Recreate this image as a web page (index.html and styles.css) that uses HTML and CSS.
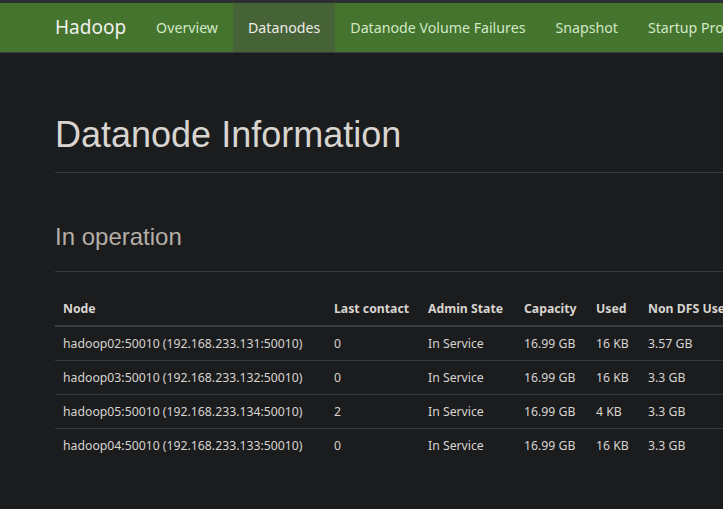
FILE: index.html
```html
<!DOCTYPE html>
<html>
<head>
<meta charset="utf-8">
<link rel="stylesheet" href="styles.css">
</head>
<body>
<div class="topstrip"></div>
<nav class="navbar">
  <a class="brand">Hadoop</a>
  <ul class="nav">
    <li><a>Overview</a></li>
    <li class="active"><a>Datanodes</a></li>
    <li><a>Datanode Volume Failures</a></li>
    <li><a>Snapshot</a></li>
    <li><a>Startup Progress</a></li>
    <li><a>Utilities</a></li>
  </ul>
</nav>
<main class="container">
  <div class="page-header">
    <h1>Datanode Information</h1>
  </div>
  <div class="page-header small">
    <h2>In operation</h2>
  </div>
  <table class="table">
    <colgroup>
      <col class="c-node"><col class="c-last"><col class="c-admin"><col class="c-cap"><col class="c-used"><col class="c-non">
    </colgroup>
    <thead>
      <tr><th>Node</th><th>Last contact</th><th>Admin State</th><th>Capacity</th><th>Used</th><th>Non DFS Used</th></tr>
    </thead>
    <tbody>
      <tr><td>hadoop02:50010 (192.168.233.131:50010)</td><td>0</td><td>In Service</td><td>16.99 GB</td><td>16 KB</td><td>3.57 GB</td></tr>
      <tr><td>hadoop03:50010 (192.168.233.132:50010)</td><td>0</td><td>In Service</td><td>16.99 GB</td><td>16 KB</td><td>3.3 GB</td></tr>
      <tr><td>hadoop05:50010 (192.168.233.134:50010)</td><td>2</td><td>In Service</td><td>16.99 GB</td><td>4 KB</td><td>3.3 GB</td></tr>
      <tr><td>hadoop04:50010 (192.168.233.133:50010)</td><td>0</td><td>In Service</td><td>16.99 GB</td><td>16 KB</td><td>3.3 GB</td></tr>
    </tbody>
  </table>
</main>
</body>
</html>
```
FILE: styles.css
```css
html, body {
  margin: 0;
  padding: 0;
  background: #1b1c1e;
  overflow: hidden;
  width: 723px;
  height: 509px;
}
body {
  font-family: "Noto Sans", "Open Sans", sans-serif;
  color: #d8d4cf;
}
.topstrip {
  height: 3px;
  background: #2e2f31;
}
.navbar {
  display: flex;
  align-items: stretch;
  height: 49px;
  background: #44742e;
  border-bottom: 1px solid #3c3f41;
  padding-left: 40px;
  white-space: nowrap;
  width: 1200px;
}
.brand {
  display: flex;
  align-items: center;
  padding: 0 15px;
  font-size: 19px;
  color: #f0f0ee;
  font-family: "Noto Sans", sans-serif;
  padding-bottom: 1px;
}
.nav {
  display: flex;
  margin: 0;
  padding: 0;
  list-style: none;
}
.nav li {
  display: flex;
}
.nav a {
  display: flex;
  align-items: center;
  padding: 0 15px 0;
  font-size: 14.2px;
  color: #d3e8c6;
}
.nav .active a {
  background: #456337;
  color: #ecebe8;
}
.container {
  padding: 0 0 0 55px;
  width: 1200px;
}
.page-header {
  margin-top: 40px;
  padding-bottom: 9px;
  border-bottom: 1px solid #36393b;
}
h1 {
  margin: 62px 0 8px;
  font-family: "Liberation Sans", Arial, sans-serif;
  font-weight: normal;
  font-size: 36px;
  line-height: 1.1;
  color: #d8d4cf;
}
.page-header.small {
  margin-top: 51px;
  margin-bottom: 20px;
}
h2 {
  margin: 0 0 12px;
  font-family: "Liberation Sans", Arial, sans-serif;
  font-weight: normal;
  font-size: 24px;
  line-height: 1.1;
  color: #b4afa7;
}
.table {
  border-collapse: collapse;
  table-layout: fixed;
  width: 700px;
  font-size: 12.25px;
}
.c-node { width: 271px; }
.c-last { width: 94px; }
.c-admin { width: 96px; }
.c-cap { width: 72px; }
.c-used { width: 52px; }
.c-non { width: 115px; }
.table th, .table td {
  text-align: left;
  padding: 8px;
  line-height: 17px;
  white-space: nowrap;
  overflow: hidden;
}
.table th {
  font-weight: bold;
  border-bottom: 2px solid #3a3d40;
}
.table td {
  border-top: 1px solid #36393b;
}
.table tbody tr:first-child td {
  border-top: 0;
}
```
